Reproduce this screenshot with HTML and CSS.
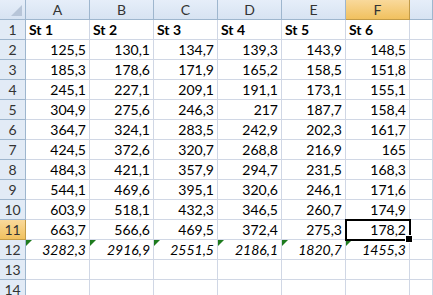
FILE: index.html
```html
<!DOCTYPE html>
<html lang="en">
<head>
    <meta charset="UTF-8">
    <title>Sheet1</title>
    <link rel="stylesheet" href="styles.css">
</head>
<body>
    <div class="sheet">
        <!-- header row -->
        <div class="corner"></div>
        <div class="colhead">A</div>
        <div class="colhead">B</div>
        <div class="colhead">C</div>
        <div class="colhead">D</div>
        <div class="colhead">E</div>
        <div class="colhead active">F</div>
        <div class="colhead"></div>

        <div class="rowhead">1</div>
        <div class="cell bold">St 1</div>
        <div class="cell bold">St 2</div>
        <div class="cell bold">St 3</div>
        <div class="cell bold">St 4</div>
        <div class="cell bold">St 5</div>
        <div class="cell bold">St 6</div>
        <div class="cell"></div>

        <div class="rowhead">2</div>
        <div class="cell num">125,5</div><div class="cell num">130,1</div><div class="cell num">134,7</div><div class="cell num">139,3</div><div class="cell num">143,9</div><div class="cell num">148,5</div><div class="cell"></div>

        <div class="rowhead">3</div>
        <div class="cell num">185,3</div><div class="cell num">178,6</div><div class="cell num">171,9</div><div class="cell num">165,2</div><div class="cell num">158,5</div><div class="cell num">151,8</div><div class="cell"></div>

        <div class="rowhead">4</div>
        <div class="cell num">245,1</div><div class="cell num">227,1</div><div class="cell num">209,1</div><div class="cell num">191,1</div><div class="cell num">173,1</div><div class="cell num">155,1</div><div class="cell"></div>

        <div class="rowhead">5</div>
        <div class="cell num">304,9</div><div class="cell num">275,6</div><div class="cell num">246,3</div><div class="cell num">217</div><div class="cell num">187,7</div><div class="cell num">158,4</div><div class="cell"></div>

        <div class="rowhead">6</div>
        <div class="cell num">364,7</div><div class="cell num">324,1</div><div class="cell num">283,5</div><div class="cell num">242,9</div><div class="cell num">202,3</div><div class="cell num">161,7</div><div class="cell"></div>

        <div class="rowhead">7</div>
        <div class="cell num">424,5</div><div class="cell num">372,6</div><div class="cell num">320,7</div><div class="cell num">268,8</div><div class="cell num">216,9</div><div class="cell num">165</div><div class="cell"></div>

        <div class="rowhead">8</div>
        <div class="cell num">484,3</div><div class="cell num">421,1</div><div class="cell num">357,9</div><div class="cell num">294,7</div><div class="cell num">231,5</div><div class="cell num">168,3</div><div class="cell"></div>

        <div class="rowhead">9</div>
        <div class="cell num">544,1</div><div class="cell num">469,6</div><div class="cell num">395,1</div><div class="cell num">320,6</div><div class="cell num">246,1</div><div class="cell num">171,6</div><div class="cell"></div>

        <div class="rowhead">10</div>
        <div class="cell num">603,9</div><div class="cell num">518,1</div><div class="cell num">432,3</div><div class="cell num">346,5</div><div class="cell num">260,7</div><div class="cell num">174,9</div><div class="cell"></div>

        <div class="rowhead active">11</div>
        <div class="cell num">663,7</div><div class="cell num">566,6</div><div class="cell num">469,5</div><div class="cell num">372,4</div><div class="cell num">275,3</div><div class="cell num selected">178,2</div><div class="cell"></div>

        <!-- sums, flagged by excel -->
        <div class="rowhead">12</div>
        <div class="cell num sum">3282,3</div><div class="cell num sum">2916,9</div><div class="cell num sum">2551,5</div><div class="cell num sum">2186,1</div><div class="cell num sum">1820,7</div><div class="cell num sum">1455,3</div><div class="cell"></div>

        <div class="rowhead">13</div>
        <div class="cell"></div><div class="cell"></div><div class="cell"></div><div class="cell"></div><div class="cell"></div><div class="cell"></div><div class="cell"></div>

        <div class="rowhead">14</div>
        <div class="cell"></div><div class="cell"></div><div class="cell"></div><div class="cell"></div><div class="cell"></div><div class="cell"></div><div class="cell"></div>
    </div>
</body>
</html>
```

FILE: styles.css
```css
* {
    margin: 0;
    padding: 0;
    box-sizing: border-box;
}

body {
    background-color: #fff;
    font-family: Lato, "Liberation Sans", sans-serif;
    font-size: 14px;
    color: #000;
    overflow: hidden;
}

.sheet {
    display: grid;
    grid-template-columns: 26px repeat(6, 64px) 1fr;
    grid-auto-rows: 20px;
    width: 433px;
}

.corner,
.colhead,
.rowhead {
    background: linear-gradient(#e6eef9, #d7e3f2);
    color: #333;
    border-right: 1px solid #9eb6ce;
    border-bottom: 1px solid #9eb6ce;
}

.corner {
    position: relative;
}

/* gray triangle in the select-all box */
.corner::after {
    content: "";
    position: absolute;
    right: 3px;
    bottom: 3px;
    border-left: 11px solid transparent;
    border-bottom: 11px solid #b7c5d8;
}

.colhead {
    text-align: center;
    line-height: 19px;
}

.rowhead {
    background: #e2ebf6;
    text-align: center;
    line-height: 19px;
}

.colhead.active,
.rowhead.active {
    background: linear-gradient(#f9d99b, #f1c15f);
    border-right-color: #c29b48;
    border-bottom-color: #c29b48;
}

.cell {
    position: relative;
    border-right: 1px solid #d0d7e5;
    border-bottom: 1px solid #d0d7e5;
    line-height: 19px;
    padding: 0 3px;
    white-space: nowrap;
}

.bold {
    font-weight: bold;
}

.num {
    text-align: right;
}

.sum {
    font-style: italic;
}

/* green error flag */
.sum::before {
    content: "";
    position: absolute;
    left: 0;
    top: 0;
    border-top: 6px solid #1e7b1e;
    border-right: 6px solid transparent;
}

.selected {
    outline: 2px solid #000;
    outline-offset: -1px;
    z-index: 1;
}

/* fill handle */
.selected::after {
    content: "";
    position: absolute;
    right: -4px;
    bottom: -4px;
    width: 6px;
    height: 6px;
    background-color: #000;
    border: 1px solid #fff;
}
```
